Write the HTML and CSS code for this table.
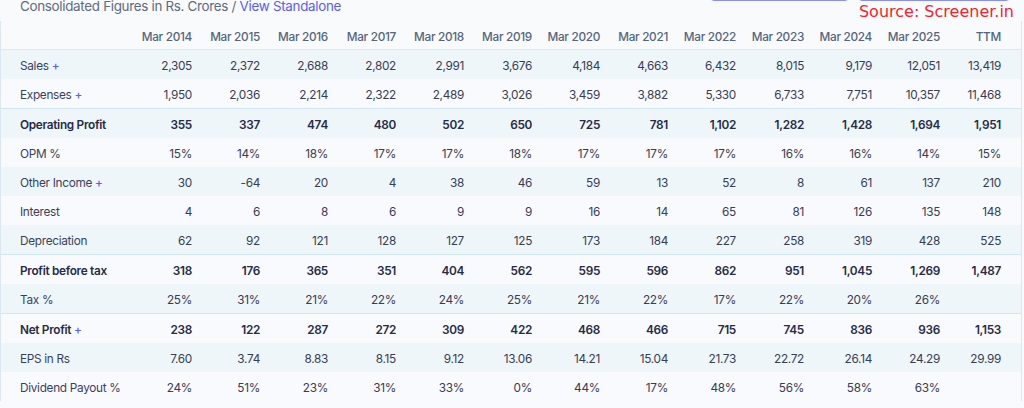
FILE: index.html
```html
<!DOCTYPE html>
<html>
<head>
<meta charset="utf-8">
<link rel="stylesheet" href="styles.css">
</head>
<body>
<div class="top">
  <p class="title">Consolidated Figures in Rs. Crores / <a class="link">View Standalone</a></p>
  <div class="actions">
    <span class="btn"></span>
    <span class="btn wide"></span>
  </div>
  <div class="source">Source: Screener.in</div>
</div>
<div class="table">
  <div class="row head">
    <span></span>
    <span>Mar 2014</span><span>Mar 2015</span><span>Mar 2016</span><span>Mar 2017</span><span>Mar 2018</span><span>Mar 2019</span><span>Mar 2020</span><span>Mar 2021</span><span>Mar 2022</span><span>Mar 2023</span><span>Mar 2024</span><span>Mar 2025</span><span>TTM</span>
  </div>
  <div class="row stripe">
    <span class="label">Sales <b class="plus">+</b></span>
    <span>2,305</span><span>2,372</span><span>2,688</span><span>2,802</span><span>2,991</span><span>3,676</span><span>4,184</span><span>4,663</span><span>6,432</span><span>8,015</span><span>9,179</span><span>12,051</span><span>13,419</span>
  </div>
  <div class="row">
    <span class="label">Expenses <b class="plus">+</b></span>
    <span>1,950</span><span>2,036</span><span>2,214</span><span>2,322</span><span>2,489</span><span>3,026</span><span>3,459</span><span>3,882</span><span>5,330</span><span>6,733</span><span>7,751</span><span>10,357</span><span>11,468</span>
  </div>
  <div class="row stripe strong">
    <span class="label">Operating Profit</span>
    <span>355</span><span>337</span><span>474</span><span>480</span><span>502</span><span>650</span><span>725</span><span>781</span><span>1,102</span><span>1,282</span><span>1,428</span><span>1,694</span><span>1,951</span>
  </div>
  <div class="row">
    <span class="label">OPM %</span>
    <span>15%</span><span>14%</span><span>18%</span><span>17%</span><span>17%</span><span>18%</span><span>17%</span><span>17%</span><span>17%</span><span>16%</span><span>16%</span><span>14%</span><span>15%</span>
  </div>
  <div class="row stripe">
    <span class="label">Other Income <b class="plus">+</b></span>
    <span>30</span><span>-64</span><span>20</span><span>4</span><span>38</span><span>46</span><span>59</span><span>13</span><span>52</span><span>8</span><span>61</span><span>137</span><span>210</span>
  </div>
  <div class="row">
    <span class="label">Interest</span>
    <span>4</span><span>6</span><span>8</span><span>6</span><span>9</span><span>9</span><span>16</span><span>14</span><span>65</span><span>81</span><span>126</span><span>135</span><span>148</span>
  </div>
  <div class="row stripe">
    <span class="label">Depreciation</span>
    <span>62</span><span>92</span><span>121</span><span>128</span><span>127</span><span>125</span><span>173</span><span>184</span><span>227</span><span>258</span><span>319</span><span>428</span><span>525</span>
  </div>
  <div class="row strong">
    <span class="label">Profit before tax</span>
    <span>318</span><span>176</span><span>365</span><span>351</span><span>404</span><span>562</span><span>595</span><span>596</span><span>862</span><span>951</span><span>1,045</span><span>1,269</span><span>1,487</span>
  </div>
  <div class="row stripe">
    <span class="label">Tax %</span>
    <span>25%</span><span>31%</span><span>21%</span><span>22%</span><span>24%</span><span>25%</span><span>21%</span><span>22%</span><span>17%</span><span>22%</span><span>20%</span><span>26%</span><span></span>
  </div>
  <div class="row strong">
    <span class="label">Net Profit <b class="plus">+</b></span>
    <span>238</span><span>122</span><span>287</span><span>272</span><span>309</span><span>422</span><span>468</span><span>466</span><span>715</span><span>745</span><span>836</span><span>936</span><span>1,153</span>
  </div>
  <div class="row stripe">
    <span class="label">EPS in Rs</span>
    <span>7.60</span><span>3.74</span><span>8.83</span><span>8.15</span><span>9.12</span><span>13.06</span><span>14.21</span><span>15.04</span><span>21.73</span><span>22.72</span><span>26.14</span><span>24.29</span><span>29.99</span>
  </div>
  <div class="row">
    <span class="label">Dividend Payout %</span>
    <span>24%</span><span>51%</span><span>23%</span><span>31%</span><span>33%</span><span>0%</span><span>44%</span><span>17%</span><span>48%</span><span>56%</span><span>58%</span><span>63%</span><span></span>
  </div>
</div>
</body>
</html>
```
FILE: styles.css
```css
html, body {
  margin: 0;
  padding: 0;
  background: #f8fafc;
  font-family: Inter, "Noto Sans", sans-serif;
  overflow: hidden;
}

.top {
  position: relative;
  display: flex;
  align-items: flex-start;
  height: 21px;
  padding-left: 20px;
}

.title {
  margin: 0;
  font-size: 13.4px;
  letter-spacing: -0.3px;
  line-height: 14px;
  color: #5e6b80;
  margin-top: -1px;
}

.link {
  color: #5b5ef0;
  text-decoration: none;
}

.actions {
  display: flex;
  gap: 9px;
  margin-left: auto;
  margin-right: 14px;
  margin-top: -30px;
}

.btn {
  display: block;
  width: 137px;
  height: 29px;
  border: 1px solid #8a8df2;
  border-radius: 4px;
  background: #f8fafc;
}

.btn.wide {
  width: 150px;
}

.source {
  position: absolute;
  right: 10px;
  top: 3px;
  font-family: "DejaVu Sans", sans-serif;
  font-size: 16px;
  line-height: 18px;
  color: #f2232d;
}

.table {
  width: 1020px;
  border-left: 1px solid #dce8f1;
  border-right: 1px solid #dce8f1;
}

.row {
  display: grid;
  grid-template-columns: 104px repeat(12, 68px) 61px;
  padding: 3px 20px 0 19px;
  height: 26px;
  align-items: center;
  font-size: 11.8px;
  letter-spacing: -0.3px;
  color: #383c55;
  background: #f8fafd;
}

.row span {
  text-align: right;
  white-space: nowrap;
}

.row span.label {
  text-align: left;
  color: #3b3f5e;
}

.row.head {
  height: 25px;
  padding-top: 3px;
  border-bottom: 1px solid #d8eaf5;
  color: #56657e;
  font-weight: 500;
  background: #f8fafc;
}

.row.stripe {
  background: #eef6fa;
}

.row.strong {
  font-weight: 600;
  color: #272b47;
  border-top: 1px solid #cfe6f3;
}

.row.strong span.label {
  color: #272b47;
}

.plus {
  color: #5b5ef0;
  font-weight: 500;
  font-size: 11.8px;
}
```
